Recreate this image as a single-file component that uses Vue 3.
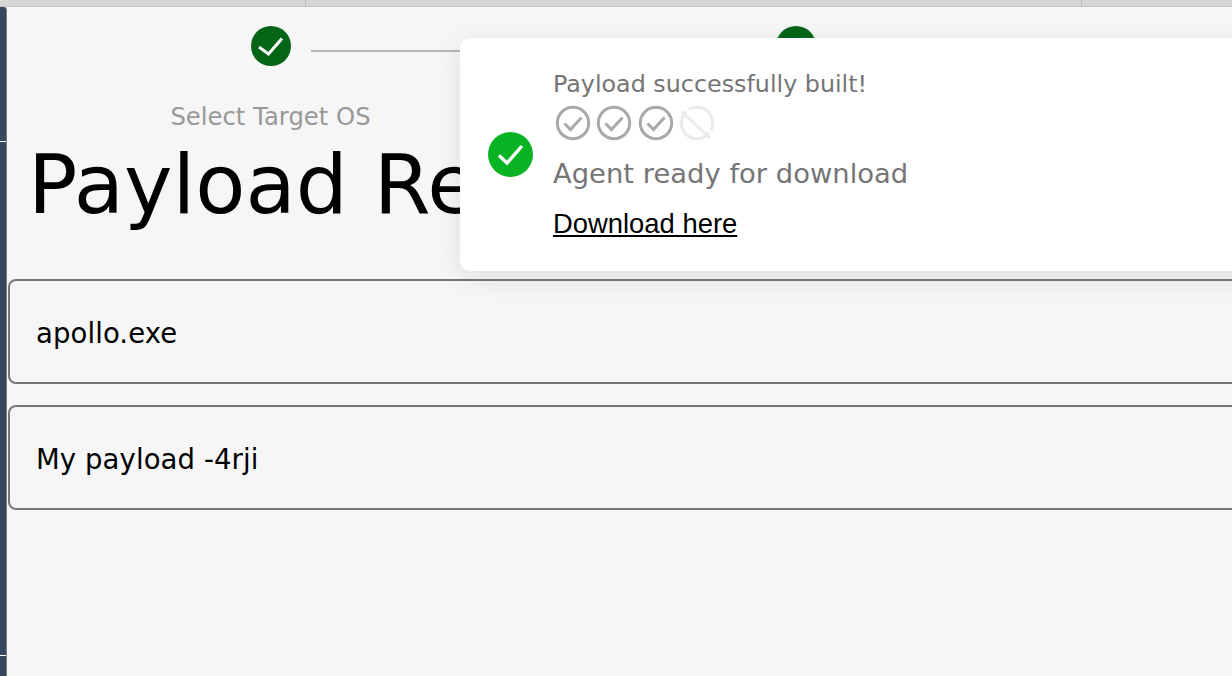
<script setup>
const steps = [
  { label: 'Select Target OS' },
  { label: 'Payload Type' },
  { label: 'Build' }
]
const builds = [{ off: false }, { off: false }, { off: false }, { off: true }]
const fields = ['apollo.exe', 'My payload -4rji']
</script>

<template>
  <div class="page">
    <div class="tabs">
      <div class="tab first"></div>
      <div class="tab second"></div>
      <div class="tab third"></div>
    </div>
    <div class="body">
      <aside class="rail">
        <div class="rail-part one"></div>
        <div class="rail-part two"></div>
        <div class="rail-part three"></div>
      </aside>
      <main class="main">
        <div class="stepper">
          <div v-for="(s, i) in steps" :key="s.label" class="step">
            <div class="step-head">
              <span class="dot">
                <svg width="40" height="40" viewBox="0 0 40 40" fill="none">
                  <path d="M8 21 L17.5 28 L31 12.5" stroke="#fff" stroke-width="3" />
                </svg>
              </span>
              <span v-if="i < steps.length - 1" class="connector"></span>
            </div>
            <div class="step-label">{{ s.label }}</div>
          </div>
        </div>
        <h1 class="title">Payload Review</h1>
        <div class="fields">
          <div v-for="f in fields" :key="f" class="field">{{ f }}</div>
        </div>
      </main>
    </div>

    <div class="toast">
      <span class="toast-icon">
        <svg width="45" height="45" viewBox="0 0 45 45">
          <circle cx="22.5" cy="22.5" r="22.5" fill="#08b324" />
          <path d="M11 23.5 L19 31 L34 14" fill="none" stroke="#fff" stroke-width="3.4" />
        </svg>
      </span>
      <div class="toast-text">
        <div class="toast-title">Payload successfully built!</div>
        <div class="build-steps">
          <svg
            v-for="(b, i) in builds"
            :key="i"
            class="build-icon"
            width="36"
            height="36"
            viewBox="0 0 36 36"
            fill="none"
          >
            <template v-if="!b.off">
              <circle cx="18" cy="18" r="15.7" stroke="#a9a9a9" stroke-width="3" />
              <path d="M9.5 18.5 L15.5 24.5 L26.5 12.5" stroke="#a9a9a9" stroke-width="3" />
            </template>
            <template v-else>
              <circle cx="18" cy="18" r="15.7" stroke="#ebebeb" stroke-width="3" />
              <path d="M6 3 L34 29" stroke="#fff" stroke-width="3" />
              <path d="M3 7 L31 33" stroke="#ebebeb" stroke-width="3" />
            </template>
          </svg>
        </div>
        <div class="toast-sub">Agent ready for download</div>
        <a class="toast-link" href="#">Download here</a>
      </div>
    </div>
  </div>
</template>

<style>
html, body { margin: 0; overflow: hidden; background: #f6f6f6; }
</style>

<style scoped>
.page {
  position: relative;
  width: 1232px;
  height: 676px;
  overflow: hidden;
  background: #f6f6f6;
  font-family: "DejaVu Sans", Verdana, sans-serif;
  display: flex;
  flex-direction: column;
}
.tabs {
  height: 6px;
  flex: none;
  display: flex;
  background: #d6d6d6;
  border-bottom: 1px solid #c4c4c4;
}
.tab { height: 100%; box-sizing: border-box; }
.tab.first { width: 306px; border-right: 1px solid #bdbdbd; }
.tab.second { width: 776px; border-right: 1px solid #bdbdbd; }
.tab.third { flex: 1; }
.body { flex: 1; display: flex; min-height: 0; }
.rail {
  width: 6px;
  flex: none;
  background: #fff;
  border-right: 1px solid #77797d;
  border-top-right-radius: 3px;
  display: flex;
  flex-direction: column;
  gap: 1px;
  overflow: hidden;
}
.rail-part { background: #34495f; }
.rail-part.one { height: 134px; }
.rail-part.two { height: 513px; }
.rail-part.three { flex: 1; }
.main { flex: 1; min-width: 0; padding-left: 1px; }
.stepper { display: flex; padding-top: 19px; }
.step { width: 525px; flex: none; text-align: center; }
.step-head {
  position: relative;
  height: 40px;
  display: flex;
  justify-content: center;
}
.dot {
  width: 40px;
  height: 40px;
  border-radius: 50%;
  background: #056517;
  display: flex;
  align-items: center;
  justify-content: center;
}
.connector {
  position: absolute;
  left: calc(50% + 40px);
  right: calc(-50% + 40px);
  top: 24px;
  height: 2px;
  background: #b4b4b4;
}
.step-label {
  margin-top: 35px;
  font-size: 24.3px;
  line-height: 32px;
  color: #999;
}
.title {
  margin: 2px 0 0;
  padding-left: 20px;
  font-size: 82px;
  font-weight: 400;
  line-height: 100px;
  color: #000;
  white-space: nowrap;
}
.fields {
  margin-top: 44px;
  display: flex;
  flex-direction: column;
  gap: 21px;
  width: 1400px;
}
.field {
  height: 105px;
  box-sizing: border-box;
  border: 2px solid #777;
  border-radius: 8px;
  padding: 3px 0 0 26px;
  display: flex;
  align-items: center;
  font-size: 27.5px;
  letter-spacing: 0.1px;
  color: #000;
}
.toast {
  position: absolute;
  left: 460px;
  top: 38px;
  width: 900px;
  height: 233px;
  box-sizing: border-box;
  padding-left: 28px;
  display: flex;
  align-items: center;
  gap: 20px;
  background: #fff;
  border-radius: 10px;
  box-shadow: 0 6px 28px rgba(0, 0, 0, 0.1);
}
.toast-icon { display: flex; flex: none; }
.toast-text { display: flex; flex-direction: column; align-items: flex-start; padding-bottom: 1px; }
.toast-title { font-size: 23.8px; line-height: 32px; color: #757575; }
.build-steps { display: flex; gap: 5.33px; margin-top: 5px; margin-left: 2px; }
.build-icon { display: block; }
.toast-sub { margin-top: 14px; font-size: 27.4px; line-height: 38px; color: #757575; }
.toast-link {
  margin-top: 15px;
  font-family: "Liberation Sans", Arial, sans-serif;
  font-size: 27.4px;
  line-height: 32px;
  color: #000;
  text-decoration: underline;
}
</style>
